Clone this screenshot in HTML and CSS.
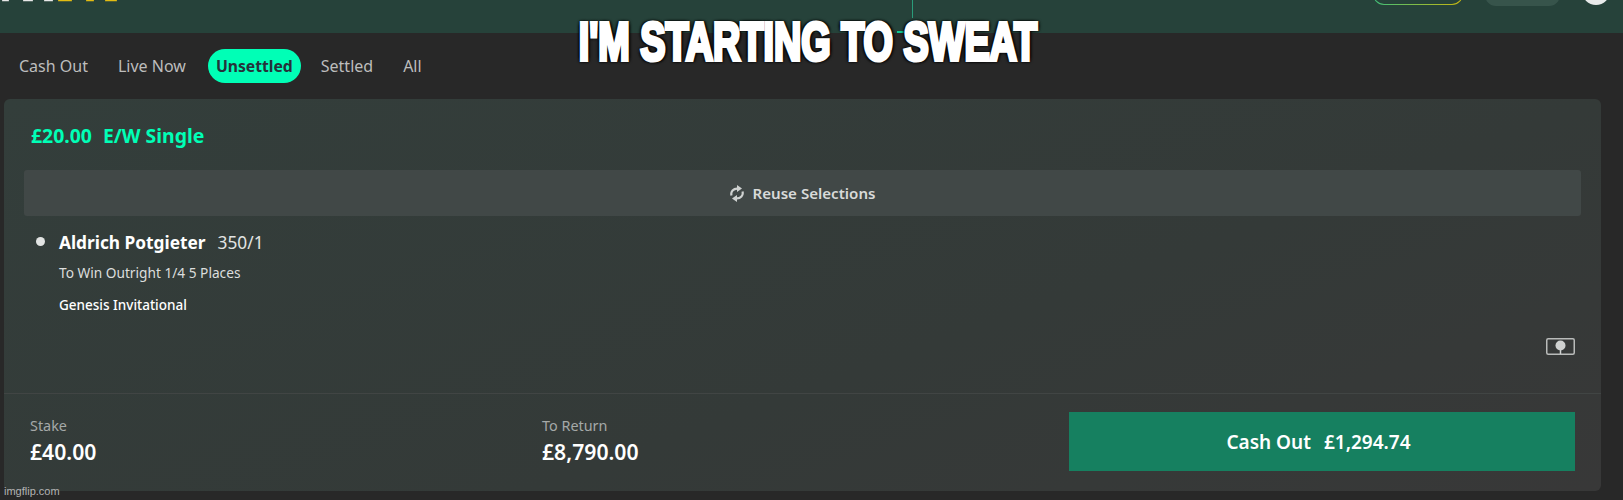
FILE: index.html
```html
<!DOCTYPE html>
<html lang="en">
<head>
  <meta charset="UTF-8">
  <title>My Bets</title>
  <link rel="stylesheet" href="styles.css">
</head>
<body>
  <div class="topbar">
    <svg class="logo-bits" viewBox="0 0 120 3" width="120" height="3">
      <rect x="2" y="0" width="7" height="1.3" rx="0.6" fill="#e8e8e8"/>
      <rect x="23" y="0" width="10" height="1.3" rx="0.6" fill="#e8e8e8"/>
      <rect x="44" y="0" width="9" height="1.3" rx="0.6" fill="#e8e8e8"/>
      <rect x="58" y="0" width="14" height="1.3" rx="0.6" fill="#e3bc12"/>
      <rect x="86" y="0" width="8" height="1.3" rx="0.6" fill="#e3bc12"/>
      <rect x="105" y="0" width="12" height="1.3" rx="0.6" fill="#e3bc12"/>
    </svg>
    <div class="top-actions">
      <span class="balance-pill"></span>
      <span class="grey-pill"></span>
      <span class="avatar"></span>
    </div>
    <span class="active-line"></span>
    <span class="active-dash"></span>
  </div>

  <div class="tabs">
    <a class="tab">Cash Out</a>
    <a class="tab">Live Now</a>
    <a class="tab active">Unsettled</a>
    <a class="tab">Settled</a>
    <a class="tab">All</a>
  </div>

  <div class="bet-card">
    <div class="bet-main">
      <div class="bet-title"><span>£20.00</span><span>E/W Single</span></div>
      <div class="reuse">
        <svg class="reuse-icon" viewBox="0 0 14 17" width="14" height="17" fill="none" stroke="#cfd2d1" stroke-width="2.2">
          <path d="M1.5 10.5C0.4 6.6 3.4 3.4 7.6 3.6"/>
          <path d="M12.5 6.5C13.6 10.4 10.6 13.6 6.4 13.4"/>
          <path d="M7 0l5 3.6-5 3.4z" fill="#cfd2d1" stroke="none"/>
          <path d="M7 17l-5-3.6 5-3.4z" fill="#cfd2d1" stroke="none"/>
        </svg>
        <span>Reuse Selections</span>
      </div>
      <div class="selection">
        <span class="bullet"></span>
        <div class="selection-info">
          <div class="selection-name"><b>Aldrich Potgieter</b><span>350/1</span></div>
          <div class="selection-market">To Win Outright 1/4 5 Places</div>
          <div class="selection-event">Genesis Invitational</div>
        </div>
      </div>
      <div class="sport-row">
        <svg viewBox="0 0 29 17" width="29" height="17" fill="none">
          <rect x="0.75" y="0.75" width="27.5" height="15.5" rx="1.5" stroke="#b9bbba" stroke-width="1.5"/>
          <circle cx="14.5" cy="7.5" r="5" fill="#cfd1d0"/>
          <path d="M14.5 11v5" stroke="#cfd1d0" stroke-width="1.5"/>
        </svg>
      </div>
    </div>
    <div class="bet-footer">
      <div class="amount stake">
        <div class="amount-label">Stake</div>
        <div class="amount-value">£40.00</div>
      </div>
      <div class="amount return">
        <div class="amount-label">To Return</div>
        <div class="amount-value">£8,790.00</div>
      </div>
      <div class="cashout-btn"><span>Cash Out</span><span>£1,294.74</span></div>
    </div>
  </div>

  <div class="meme-caption">I'M STARTING TO SWEAT</div>
  <div class="watermark">imgflip.com</div>
</body>
</html>
```

FILE: styles.css
```css
html, body {
  height: 100%;
}

body {
  margin: 0;
  height: 500px;
  overflow: hidden;
  position: relative;
  background: #282828;
  color: #fff;
  font-family: "Noto Sans", "Open Sans", sans-serif;
}

.topbar {
  height: 33px;
  background: #26423a;
  display: flex;
  justify-content: space-between;
  align-items: flex-start;
  position: relative;
  overflow: hidden;
}

.top-actions {
  display: flex;
  align-items: flex-start;
  padding-right: 13px;
}

.balance-pill {
  width: 90px;
  height: 28px;
  margin: -23px 22px 0 0;
  box-sizing: border-box;
  border: 1px solid transparent;
  border-radius: 11px;
  background: linear-gradient(#26423a, #26423a) padding-box, linear-gradient(90deg, #3fc07a, #c9b60e) border-box;
}

.grey-pill {
  width: 75px;
  height: 30px;
  margin: -24px 22px 0 0;
  border-radius: 11px;
  background: #37544b;
}

.avatar {
  width: 28px;
  height: 28px;
  margin-top: -23px;
  border-radius: 50%;
  background: #e8eaea;
}

.active-line {
  position: absolute;
  left: 912px;
  top: 0;
  width: 1px;
  height: 18px;
  background: #2a9c7a;
}

.active-dash {
  position: absolute;
  left: 897px;
  top: 31px;
  width: 8px;
  height: 2px;
  background: #0fc892;
}

.tabs {
  height: 66px;
  display: flex;
  align-items: center;
  padding: 0 0 0 11px;
  font-size: 16px;
  color: #bdbdbd;
}

.tab {
  padding: 7px 8px;
  margin-right: 14px;
  line-height: 20px;
}

.tab.active {
  background: #00ffb6;
  color: #26323a;
  font-weight: 700;
  font-size: 15.7px;
  border-radius: 17px;
  margin-right: 12px;
}

.bet-card {
  margin: 0 22px 0 4px;
  height: 392px;
  border-radius: 6px;
  background: linear-gradient(160deg, #333e3b, #343a38 60%, #383838);
  display: flex;
  flex-direction: column;
}

.bet-main {
  flex: 1;
  padding: 0 20px 0 20px;
  border-bottom: 1px solid #414544;
  display: flex;
  flex-direction: column;
}

.bet-title {
  display: flex;
  gap: 11px;
  padding: 24px 0 0 7px;
  height: 47px;
  font-size: 19.4px;
  font-weight: 700;
  line-height: 26px;
  color: #00ffb6;
}

.reuse {
  height: 46px;
  background: #414847;
  border-radius: 3px;
  display: flex;
  align-items: center;
  justify-content: center;
  gap: 9px;
  font-size: 15.1px;
  font-weight: 600;
  color: #d8dad9;
}

.selection {
  display: flex;
  padding: 15px 0 0 12px;
}

.bullet {
  width: 9px;
  height: 9px;
  border-radius: 50%;
  background: #e2e4e3;
  margin: 6px 14px 0 0;
}

.selection-name {
  font-size: 17.3px;
  line-height: 24px;
  display: flex;
  gap: 12px;
}

.selection-name span {
  color: #e2e4e3;
}

.selection-market {
  font-size: 13.7px;
  line-height: 20px;
  margin-top: 8px;
  color: #dcdedd;
}

.selection-event {
  font-size: 13.5px;
  font-weight: 500;
  line-height: 20px;
  margin-top: 12px;
}

.sport-row {
  margin-top: auto;
  margin-bottom: 38px;
  display: flex;
  justify-content: flex-end;
  padding-right: 6px;
}

.bet-footer {
  height: 97px;
  display: flex;
}

.amount {
  padding: 22px 0 0 26px;
  width: 512px;
  box-sizing: border-box;
}

.amount-label {
  font-size: 14.4px;
  line-height: 20px;
  color: #a5a9a8;
}

.amount-value {
  font-size: 21.2px;
  font-weight: 600;
  line-height: 26px;
  margin-top: 3px;
}

.amount.return {
  width: 553px;
}

.cashout-btn {
  width: 506px;
  height: 59px;
  box-sizing: border-box;
  padding-right: 7px;
  margin-top: 18px;
  background: #168060;
  display: flex;
  align-items: center;
  justify-content: center;
  gap: 13px;
  font-size: 19px;
  font-weight: 600;
}

.meme-caption {
  position: absolute;
  left: 0;
  top: 10px;
  width: 1616px;
  text-align: center;
  font-family: "Liberation Sans", sans-serif;
  font-size: 54px;
  line-height: 62px;
  font-weight: 700;
  color: #fff;
  -webkit-text-stroke: 4px #fff;
  transform: scaleX(0.7);
  text-shadow: 0 0 4px #000, 3px 2px 3px #000, -3px -2px 3px #000, 3px -2px 3px #000, -3px 2px 3px #000;
}

.watermark {
  position: absolute;
  left: 4px;
  top: 484px;
  font-family: "Liberation Sans", sans-serif;
  font-size: 11px;
  line-height: 15px;
  color: #b3b3b3;
}
```
